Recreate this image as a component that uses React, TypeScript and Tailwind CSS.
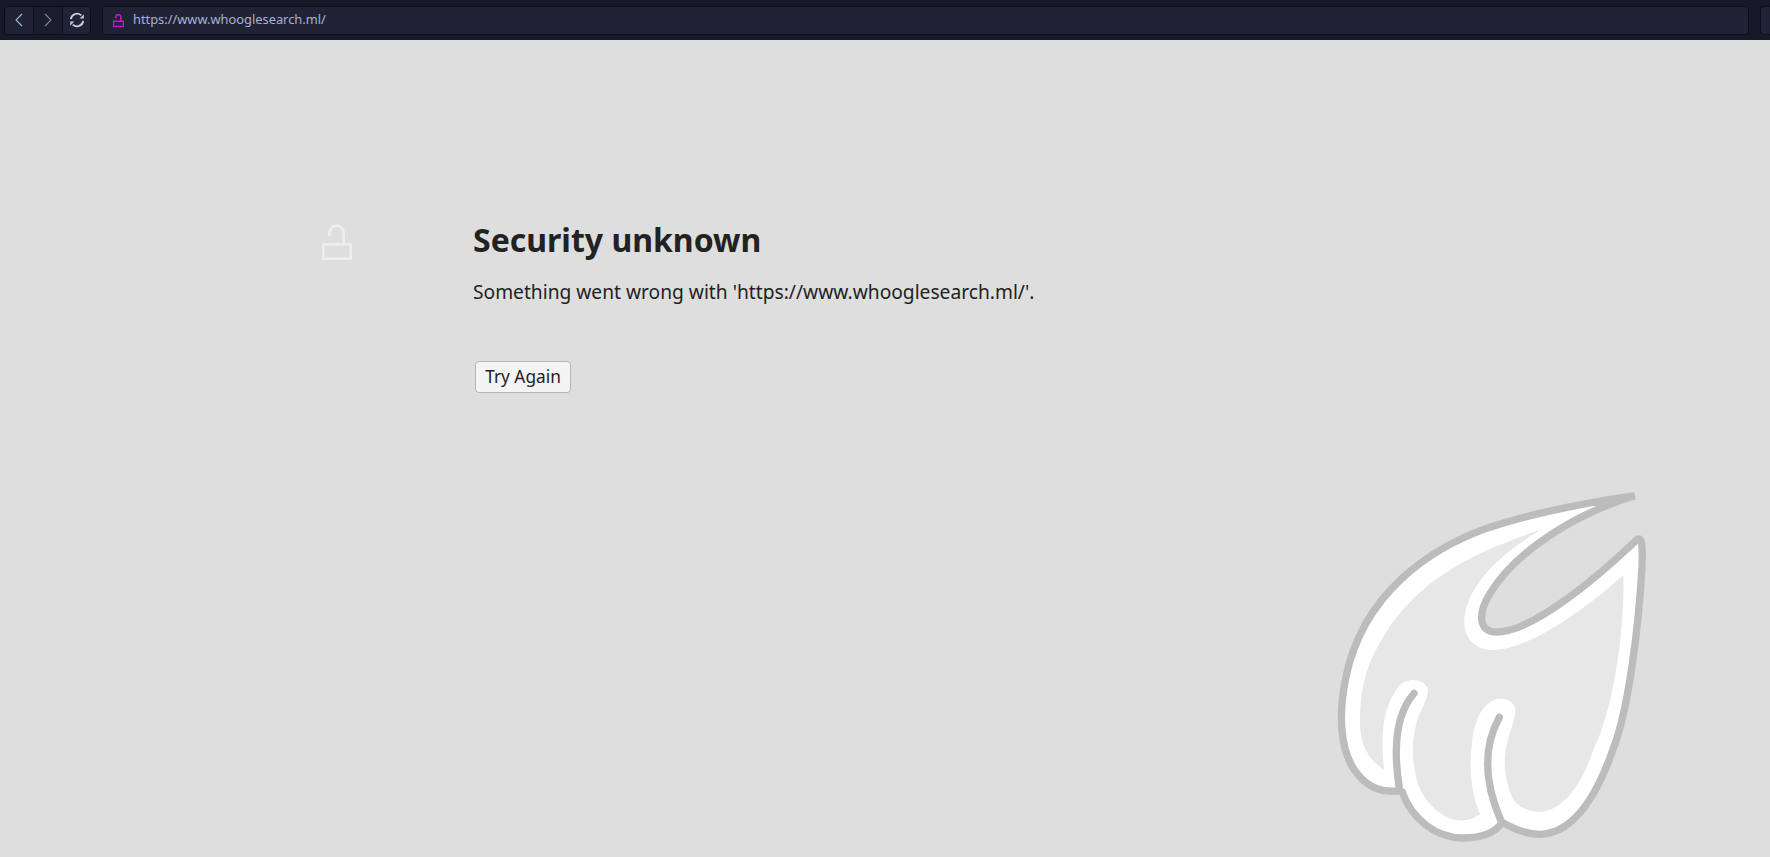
import React from "react";

const OpenLock = ({ className, stroke = 2.6 }: { className: string; stroke?: number }) => (
  <svg viewBox="0 0 30 36" fill="none" className={className}>
    <path d="M7.3 12V9a7.2 7.2 0 0 1 14.4 0V20" stroke="currentColor" strokeWidth={stroke} />
    <rect x="1.3" y="20.3" width="27.4" height="14.4" stroke="currentColor" strokeWidth={stroke} />
  </svg>
);

const Logo = () => (
  <svg viewBox="0 0 1050 1131" className="absolute bottom-0 left-[1320px] h-[377px] w-[350px]">
    <path
      d="M944 47C800 68 650 95 500 145C330 205 130 340 78 590C55 700 60 800 100 865C135 920 180 940 245 932C275 1020 350 1074 430 1074C480 1074 525 1060 547 1027C590 1052 625 1063 660 1063C760 1060 830 950 880 805C925 690 955 450 966 260C968 200 967 170 952 178C850 275 640 460 525 456C480 455 470 405 510 340C590 210 770 100 944 47Z"
      fill="#fff"
      stroke="#bcbcbc"
      strokeWidth="22"
      strokeLinejoin="bevel"
    />
    <path
      d="M665 148C470 215 300 290 190 470C150 535 130 590 122 670C112 770 130 830 192 868C180 760 190 680 235 620C260 590 310 595 323 625C330 660 290 690 280 780C275 840 285 880 295 915C325 990 410 1055 480 1002C450 930 445 850 460 760C475 690 505 655 545 656C580 660 590 680 585 705C570 770 550 800 555 870C560 910 570 945 588 970C680 1040 770 960 820 810C880 690 915 450 910 285C790 395 620 510 520 510C440 510 415 440 445 365C480 280 560 210 665 148Z"
      fill="#e7e7e7"
    />
    <path
      d="M238 925C220 810 225 705 282 640M538 712C490 800 490 900 542 1020"
      fill="none"
      stroke="#bcbcbc"
      strokeWidth="22"
      strokeLinecap="round"
    />
  </svg>
);

export default function App() {
  return (
    <div className="relative flex h-[857px] w-[1770px] flex-col overflow-hidden bg-[#dedede] font-['Noto_Sans',sans-serif]">
      <header className="flex h-10 shrink-0 items-center bg-[#161a28] pl-[4px]">
        <div className="flex h-[29px] w-[87px] overflow-hidden rounded border border-[#0d0f18] bg-[#1f2335]">
          <div className="flex w-[29px] items-center justify-center border-r border-[#0d0f18]">
            <svg viewBox="0 0 10 14" className="h-[14px] w-[10px] fill-none stroke-[#a9b1d6]">
              <path d="M8 1 2 7l6 6" strokeWidth="1.1" />
            </svg>
          </div>
          <div className="flex w-[29px] items-center justify-center border-r border-[#0d0f18] bg-[#191d2c]">
            <svg viewBox="0 0 10 14" className="h-[14px] w-[10px] fill-none stroke-[#7e849f]">
              <path d="m2 1 6 6-6 6" strokeWidth="1.1" />
            </svg>
          </div>
          <div className="flex flex-1 items-center justify-center">
            <svg viewBox="0 0 16 16" className="h-4 w-4 fill-none stroke-[#c5cae0]">
              <path d="M1.8 7.2A6.2 6.2 0 0 1 12.2 3.4M14.2 8.8A6.2 6.2 0 0 1 3.8 12.6" strokeWidth="1.9" />
              <path d="M14.8 2.2v4.2h-4.2zM1.2 13.8V9.6h4.2z" strokeWidth="0" className="fill-[#c5cae0]" />
            </svg>
          </div>
        </div>
        <div className="ml-[11px] flex h-[29px] w-[1647px] items-center rounded border border-[#0d0f18] bg-[#1f2335] pl-[10px]">
          <OpenLock className="h-[13px] w-[11px] text-[#d010d0]" stroke={4.2} />
          <span className="ml-[9px] text-[12.85px] text-[#a9b1d6]">https://www.whooglesearch.ml/</span>
        </div>
        <div className="ml-[11px] h-[29px] flex-1 rounded-l border border-r-0 border-[#0d0f18] bg-[#1f2335]" />
      </header>
      <main className="flex pl-[322px] pt-[179px]">
        <OpenLock className="mt-[5px] h-[36px] w-[30px] text-[#eeeeee]" />
        <div className="ml-[121px] text-[#222222]">
          <h1 className="text-[32px] leading-[42px] font-bold">Security unknown</h1>
          <p className="mt-[18px] text-[19.2px] leading-[26px]">
            Something went wrong with 'https://www.whooglesearch.ml/'.
          </p>
          <button className="mt-[56px] ml-[2px] flex h-[32px] w-[96px] items-center justify-center rounded-[4px] border border-[#b5b5b5] bg-[#f4f4f4] text-[17.28px] text-[#222222]">
            Try Again
          </button>
        </div>
      </main>
      <Logo />
    </div>
  );
}
